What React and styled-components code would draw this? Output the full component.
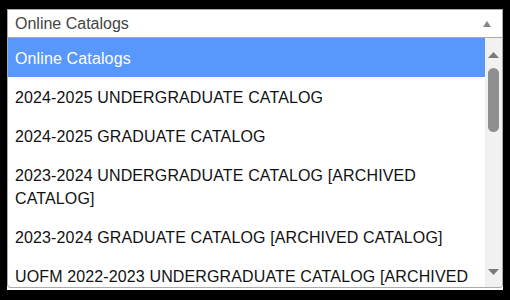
import React from 'react';
import styled, { createGlobalStyle } from 'styled-components';

const GlobalStyle = createGlobalStyle`
  html, body {
    margin: 0;
    padding: 0;
    background: #ffffff;
  }
  * {
    box-sizing: border-box;
  }
`;

const Frame = styled.div`
  width: 510px;
  height: 300px;
  border-style: solid;
  border-color: #000000;
  border-width: 9px 7px 10px 7px;
  background: #ffffff;
  font-family: 'Liberation Sans', Arial, sans-serif;
  font-size: 16px;
`;

const Dropdown = styled.div`
  display: flex;
  flex-direction: column;
  width: 100%;
`;

const SelectBox = styled.div`
  display: flex;
  align-items: center;
  height: 29px;
  padding: 0 7px 0 7px;
  border: 1px solid #aaaaaa;
  color: #444444;
  line-height: 26px;
`;

const SelectLabel = styled.span`
  flex: 1;
  white-space: nowrap;
  overflow: hidden;
`;

const Caret = styled.span`
  width: 0;
  height: 0;
  margin-right: 4px;
  border-style: solid;
  border-width: 0 4.5px 6px 4.5px;
  border-color: transparent transparent #888888 transparent;
`;

const Results = styled.div`
  display: flex;
  height: 250px;
  border: 1px solid #aaaaaa;
  border-top: none;
  border-radius: 0 0 4px 4px;
  overflow: hidden;
`;

const OptionList = styled.ul`
  flex: 1;
  margin: 0;
  padding: 0;
  list-style: none;
  overflow: hidden;
`;

const Option = styled.li`
  padding: 9px 7px 7px 7px;
  line-height: 23px;
  letter-spacing: 0.13px;
  color: ${props => (props.highlighted ? '#ffffff' : '#111111')};
  background: ${props => (props.highlighted ? '#5897fb' : 'transparent')};
`;

const Scrollbar = styled.div`
  display: flex;
  flex-direction: column;
  align-items: center;
  width: 17px;
  padding: 14px 0 12px 0;
  background: #f1f1f1;
`;

const Thumb = styled.div`
  width: 11px;
  height: 64px;
  margin-top: 10px;
  border-radius: 6px;
  background: #8f8f8f;
`;

const Spacer = styled.div`
  flex: 1;
`;

const Arrow = ({ down }) => (
  <svg width="11" height="6" viewBox="0 0 11 6">
    <polygon
      points={down ? '0,0 11,0 5.5,6' : '5.5,0 11,6 0,6'}
      fill="#7a7a7a"
    />
  </svg>
);

const catalogs = [
  'Online Catalogs',
  '2024-2025 UNDERGRADUATE CATALOG',
  '2024-2025 GRADUATE CATALOG',
  '2023-2024 UNDERGRADUATE CATALOG [ARCHIVED CATALOG]',
  '2023-2024 GRADUATE CATALOG [ARCHIVED CATALOG]',
  'UOFM 2022-2023 UNDERGRADUATE CATALOG [ARCHIVED CATALOG]',
];

export default function App() {
  return (
    <>
      <GlobalStyle />
      <Frame>
        <Dropdown>
          <SelectBox>
            <SelectLabel>Online Catalogs</SelectLabel>
            <Caret />
          </SelectBox>
          <Results>
            <OptionList>
              {catalogs.map((name, index) => (
                <Option key={`catalog${index}`} highlighted={index === 0}>
                  {name}
                </Option>
              ))}
            </OptionList>
            <Scrollbar>
              <Arrow />
              <Thumb />
              <Spacer />
              <Arrow down />
            </Scrollbar>
          </Results>
        </Dropdown>
      </Frame>
    </>
  );
}
